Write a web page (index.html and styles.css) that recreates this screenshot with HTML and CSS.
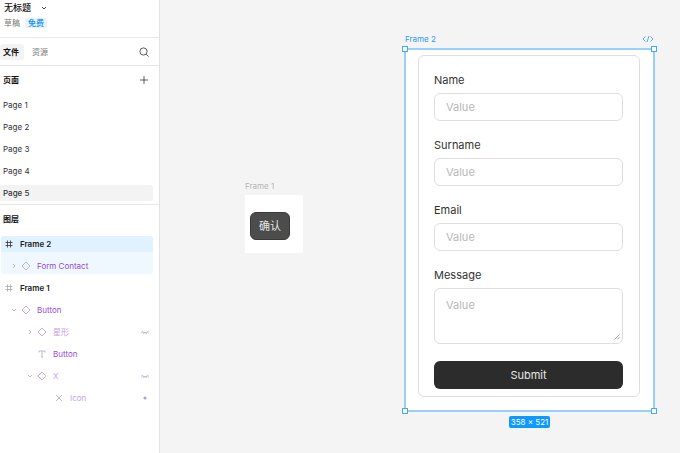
FILE: index.html
```html
<!DOCTYPE html>
<html lang="zh">
<head>
	<meta charset="utf-8">
	<title>无标题</title>
	<link rel="stylesheet" href="styles.css">
</head>
<body>
	<svg class="sprite" width="0" height="0">
		<symbol id="diamond" viewBox="0 0 10 10"><path d="M5 1L9 5L5 9L1 5Z"/></symbol>
		<symbol id="frame" viewBox="0 0 10 10"><path d="M3.5 1.5V8.5M6.5 1.5V8.5M1.5 3.5H8.5M1.5 6.5H8.5"/></symbol>
		<symbol id="right" viewBox="0 0 6 6"><path d="M2 1L4 3L2 5"/></symbol>
		<symbol id="down" viewBox="0 0 6 6"><path d="M1 2L3 4L5 2"/></symbol>
		<symbol id="closed-eye" viewBox="0 0 10 10"><path d="M1.5 4Q5 7.5 8.5 4M2.5 5L1.2 6.2M4 5.7L3.6 7M6 5.7L6.4 7M7.5 5L8.8 6.2"/></symbol>
	</svg>
	<div class="app">
		<aside class="sidebar">
			<header class="file">
				<button class="file-name">无标题 <svg class="arrow"><use href="#down"/></svg></button>
				<div class="file-info"><a href="#">草稿</a><span class="plan">免费</span></div>
			</header>
			<nav class="tabs">
				<button class="tab active">文件</button>
				<button class="tab">资源</button>
				<button class="tool" aria-label="搜索"><svg viewBox="0 0 10 10"><circle cx="4.5" cy="4.5" r="3.6"/><path d="M7.2 7.2L9.6 9.6"/></svg></button>
			</nav>
			<section class="pages">
				<div class="section-head">
					<h2>页面</h2>
					<button class="tool" aria-label="添加"><svg viewBox="0 0 10 10"><path d="M5 1V9M1 5H9"/></svg></button>
				</div>
				<ul>
					<li><a href="#">Page 1</a></li>
					<li><a href="#">Page 2</a></li>
					<li><a href="#">Page 3</a></li>
					<li><a href="#">Page 4</a></li>
					<li><a href="#" class="current">Page 5</a></li>
				</ul>
			</section>
			<section class="layers">
				<div class="section-head"><h2>图层</h2></div>
				<div class="selected">
					<div class="layer top"><svg class="icon"><use href="#frame"/></svg>Frame 2</div>
					<div class="layer level1"><svg class="arrow"><use href="#right"/></svg><svg class="icon"><use href="#diamond"/></svg>Form Contact</div>
				</div>
				<div class="layer top muted"><svg class="icon"><use href="#frame"/></svg>Frame 1</div>
				<div class="layer level1"><svg class="arrow"><use href="#down"/></svg><svg class="icon"><use href="#diamond"/></svg>Button</div>
				<div class="layer level2 hidden"><svg class="arrow"><use href="#right"/></svg><svg class="icon"><use href="#diamond"/></svg>星形<svg class="icon state"><use href="#closed-eye"/></svg></div>
				<div class="layer level2"><span class="arrow"></span><svg class="icon" viewBox="0 0 10 10"><path d="M2 3.5V2H8V3.5M5 2V8M4 8H6"/></svg>Button</div>
				<div class="layer level2 hidden"><svg class="arrow"><use href="#down"/></svg><svg class="icon"><use href="#diamond"/></svg>X<svg class="icon state"><use href="#closed-eye"/></svg></div>
				<div class="layer level3 hidden"><span class="arrow"></span><svg class="icon" viewBox="0 0 10 10"><path d="M2 2L8 8M8 2L2 8"/></svg>Icon<svg class="icon state" viewBox="0 0 10 10"><circle class="dot" cx="5" cy="5" r="1.6"/></svg></div>
			</section>
		</aside>
		<main class="canvas">
			<div class="node frame1">
				<div class="node-name">Frame 1</div>
				<div class="node-body"><button class="confirm">确认</button></div>
			</div>
			<div class="node frame2">
				<div class="node-name">Frame 2<svg class="code" viewBox="0 0 12 8"><path d="M3.5 1.5L1 4L3.5 6.5M8.5 1.5L11 4L8.5 6.5M7 1L5 7"/></svg></div>
				<div class="node-body">
					<form class="contact">
						<label for="name">Name</label>
						<input type="text" id="name" placeholder="Value">
						<label for="surname">Surname</label>
						<input type="text" id="surname" placeholder="Value">
						<label for="email">Email</label>
						<input type="text" id="email" placeholder="Value">
						<label for="message">Message</label>
						<div class="message">
							<textarea id="message" placeholder="Value"></textarea>
							<svg class="grip" viewBox="0 0 6 6"><path d="M0.5 5.5L5.5 0.5M3.2 5.5L5.5 3.2"/></svg>
						</div>
						<button type="submit">Submit</button>
					</form>
					<i class="handle tl"></i><i class="handle tr"></i><i class="handle bl"></i><i class="handle br"></i>
				</div>
				<span class="size">358 × 521</span>
			</div>
		</main>
	</div>
</body>
</html>
```
FILE: styles.css
```css
* {
	box-sizing: border-box;
}
body {
	margin: 0;
	font-family: Inter, "Noto Sans CJK SC", sans-serif;
	font-size: 8px;
	line-height: 16px;
	color: #333;
}
button, input, textarea {
	font: inherit;
	color: inherit;
	margin: 0;
	padding: 0;
	border: none;
	background: none;
}
a {
	color: inherit;
	text-decoration: none;
}
ul {
	list-style: none;
	margin: 0;
	padding: 0;
}
svg {
	fill: none;
	stroke: currentColor;
	stroke-width: 0.8;
	flex: none;
}
.sprite {
	position: absolute;
}
.app {
	display: flex;
	min-height: 100vh;
}

/* sidebar */
.sidebar {
	width: 160px;
	flex: none;
	background: #fff;
	border-right: 1px solid #e2e2e2;
}
.file {
	height: 38px;
	padding-left: 4px;
	border-bottom: 1px solid #e8e8e8;
}
.file-name {
	display: flex;
	align-items: center;
	gap: 10px;
	font-size: 9px;
	font-weight: 500;
	color: #111;
}
.arrow {
	width: 6px;
	height: 6px;
	flex: none;
}
.file-info {
	display: flex;
	align-items: center;
	gap: 5px;
	height: 14px;
	color: #777;
}
.plan {
	padding: 0 3px;
	line-height: 10px;
	border-radius: 2px;
	background: #e5f4ff;
	color: #0d8de8;
	font-weight: 500;
}
.tabs {
	display: flex;
	align-items: center;
	height: 28px;
	padding-right: 10px;
	border-bottom: 1px solid #e8e8e8;
}
.tab {
	padding: 0 5px 0 3px;
	margin-right: 5px;
	border-radius: 3px;
	color: #777;
}
.tab.active {
	background: #f3f3f3;
	color: #111;
	font-weight: 600;
}
.tool {
	display: flex;
	margin-left: auto;
}
.tool svg {
	width: 10px;
	height: 10px;
}
.section-head {
	display: flex;
	align-items: center;
	height: 28px;
	padding: 0 10px 0 3px;
}
h2 {
	margin: 0;
	font-size: 8px;
	font-weight: 600;
	color: #111;
}
.pages {
	border-bottom: 1px solid #e8e8e8;
}
.pages li {
	padding: 3px 6px 3px 0;
}
.pages a {
	display: block;
	padding-left: 3px;
}
.pages a.current {
	background: #f3f3f3;
	border-radius: 0 3px 3px 0;
	font-weight: 500;
}
.layers .section-head {
	margin-bottom: 3px;
}
.selected {
	margin: 0 6px 3px 1px;
	border-radius: 3px;
	background: #f0f8ff;
	overflow: hidden;
}
.layer {
	display: flex;
	align-items: center;
	height: 22px;
	padding-right: 9px;
	color: #9747e0;
}
.layer .icon {
	width: 10px;
	height: 10px;
	margin-right: 6px;
	color: #b9a0d8;
}
.layer .arrow {
	margin-right: 4px;
	color: #aaa;
}
.layer.top {
	padding-left: 3px;
	font-weight: 600;
	color: #222;
}
.layer.top .icon {
	color: #333;
}
.layer.muted {
	padding-left: 4px;
}
.layer.muted .icon {
	color: #aaa;
}
.selected .top {
	height: 16px;
	background: #e0f1ff;
}
.level1 {
	padding-left: 11px;
}
.selected .level1 {
	padding-top: 6px;
	padding-left: 10px;
}
.level2 {
	padding-left: 27px;
}
.level3 {
	padding-left: 44px;
}
.layer.hidden {
	color: #c3a5e5;
}
.layer .state {
	margin: 0 0 0 auto;
}
.layer .dot {
	fill: currentColor;
	stroke: none;
}

/* canvas */
.canvas {
	position: relative;
	flex: 1;
	background: #f4f4f4;
}
.node {
	position: absolute;
}
.node-name {
	display: flex;
	align-items: center;
	justify-content: space-between;
	height: 18px;
	color: #b5b5b5;
}
.node-body {
	background: #fff;
}
.frame1 {
	left: 85px;
	top: 177px;
	width: 58px;
}
.frame1 .node-body {
	padding: 17px 5px 13px;
}
.confirm {
	display: block;
	width: 40px;
	height: 28px;
	border: 1px solid #3a3a3a;
	border-radius: 6px;
	background: #4c4c4c;
	color: #e5e5e5;
	font-size: 11px;
}
.frame2 {
	left: 244px;
	top: 30px;
	width: 251px;
	text-align: center;
}
.frame2 .node-name {
	padding: 0 1px;
	color: #2d9bf0;
}
.code {
	width: 12px;
	height: 8px;
}
.frame2 .node-body {
	position: relative;
	padding: 5px 13px 13px 12px;
	border: 2px solid #97d0fb;
}
.contact {
	display: flex;
	flex-direction: column;
	padding: 16px 16px 7px 15px;
	border: 1px solid #dedede;
	border-radius: 6px;
	font-size: 11px;
	text-align: left;
}
.contact label {
	margin-bottom: 5px;
}
.contact input, .contact textarea {
	display: block;
	width: 100%;
	height: 28px;
	padding: 0 11px;
	border: 1px solid #dedede;
	border-radius: 6px;
	background: #fff;
}
.contact input {
	margin-bottom: 16px;
}
.contact textarea {
	height: 56px;
	padding-top: 8px;
	resize: none;
}
.contact ::placeholder {
	color: #b8b8b8;
}
.message {
	position: relative;
	margin-bottom: 17px;
}
.grip {
	position: absolute;
	right: 3px;
	bottom: 4px;
	width: 6px;
	height: 6px;
	color: #999;
}
.contact button {
	height: 28px;
	border-radius: 6px;
	background: #2c2c2c;
	color: #e8e8e8;
}
.handle {
	position: absolute;
	width: 6px;
	height: 6px;
	border: 1px solid #45aaf2;
	background: #fff;
}
.tl, .tr {
	top: -4px;
}
.bl, .br {
	bottom: -4px;
}
.tl, .bl {
	left: -4px;
}
.tr, .br {
	right: -4px;
}
.size {
	display: inline-block;
	margin-top: 4px;
	padding: 0 2px;
	line-height: 12px;
	border-radius: 2px;
	background: #0d99ff;
	color: #fff;
}
```
